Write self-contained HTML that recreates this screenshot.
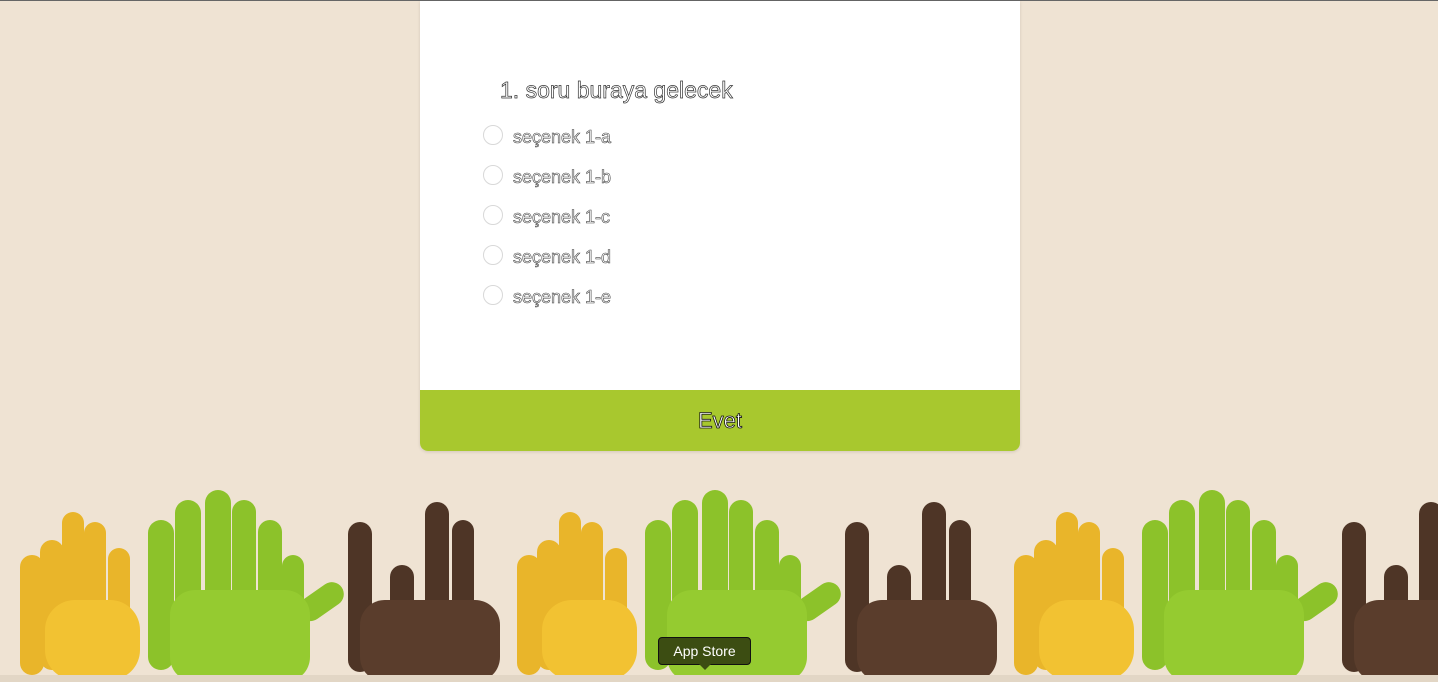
<!DOCTYPE html>
<html><head><meta charset="utf-8"><style>
html,body{margin:0;padding:0}
body{width:1438px;height:682px;background:#efe3d3;position:relative;overflow:hidden;font-family:"Liberation Sans",sans-serif}
.top{position:absolute;left:0;top:0;width:1438px;height:1px;background:#666}
.card{position:absolute;left:420px;top:1px;width:600px;height:450px;background:#fff;border-radius:0 0 8px 8px;overflow:hidden;box-shadow:0 1px 3px rgba(0,0,0,.12)}
.q{position:absolute;left:80px;top:76px;font-size:23px;color:#fff;-webkit-text-stroke:0.7px #333;letter-spacing:0}
.opt{position:absolute;left:63px;font-size:18px;color:#fff;-webkit-text-stroke:0.6px #444}
.opt i{position:absolute;left:0;top:-1px;width:18px;height:18px;border:1px solid #d8d8d8;border-radius:50%}
.opt span{position:absolute;left:30px;top:1px;white-space:nowrap}
.btn{position:absolute;left:0;top:389px;width:600px;height:61px;background:#a8c82e;text-align:center;line-height:61px;font-size:22px;color:#fff;-webkit-text-stroke:0.8px #111}
.tip{position:absolute;left:658px;top:637px;width:91px;height:26px;background:#3c4d12;border:1px solid #111;border-radius:4px;color:#fff;font-size:14px;text-align:center;line-height:26px}
.tip:after{content:"";position:absolute;left:40px;top:26px;border:6px solid transparent;border-top-color:#3c4d12}
svg{position:absolute;left:0;top:480px}
</style></head><body>
<div class="top"></div>
<svg width="1438" height="202" viewBox="0 480 1438 202">
<defs>
<g id="h">
 <g fill="#e9b52a">
  <rect x="20" y="555" width="24" height="120" rx="12"/>
  <rect x="40" y="540" width="24" height="130" rx="12"/>
  <rect x="62" y="512" width="22" height="120" rx="11"/>
  <rect x="84" y="522" width="22" height="110" rx="11"/>
  <rect x="108" y="548" width="22" height="90" rx="11"/>
  <rect x="45" y="600" width="95" height="80" rx="30" fill="#f2c232"/>
 </g>
 <g fill="#8cc22a">
  <rect x="148" y="520" width="26" height="150" rx="13"/>
  <rect x="175" y="500" width="26" height="170" rx="13"/>
  <rect x="205" y="490" width="26" height="180" rx="13"/>
  <rect x="232" y="500" width="24" height="170" rx="12"/>
  <rect x="258" y="520" width="24" height="150" rx="12"/>
  <rect x="282" y="555" width="22" height="90" rx="11"/>
  <rect x="295" y="590" width="50" height="24" rx="12" transform="rotate(-35 320 600)"/>
  <rect x="170" y="590" width="140" height="92" rx="25" fill="#95cb30"/>
 </g>
 <g fill="#4e3526">
  <rect x="348" y="522" width="24" height="150" rx="12"/>
  <rect x="425" y="502" width="24" height="120" rx="12"/>
  <rect x="452" y="520" width="22" height="120" rx="11"/>
  <rect x="390" y="565" width="24" height="90" rx="12"/>
  <rect x="360" y="600" width="140" height="82" rx="25" fill="#5a3d2c"/>
 </g>
</g>
</defs>
<use href="#h"/>
<use href="#h" x="497"/>
<use href="#h" x="994"/>
<rect x="0" y="675" width="1438" height="7" fill="#e2d6c5"/>
</svg>
<div class="card">
 <div class="q">1. soru buraya gelecek</div>
 <div class="opt" style="top:125px"><i></i><span>seçenek 1-a</span></div>
 <div class="opt" style="top:165px"><i></i><span>seçenek 1-b</span></div>
 <div class="opt" style="top:205px"><i></i><span>seçenek 1-c</span></div>
 <div class="opt" style="top:245px"><i></i><span>seçenek 1-d</span></div>
 <div class="opt" style="top:285px"><i></i><span>seçenek 1-e</span></div>
 <div class="btn">Evet</div>
</div>
<div class="tip">App Store</div>
</body></html>
